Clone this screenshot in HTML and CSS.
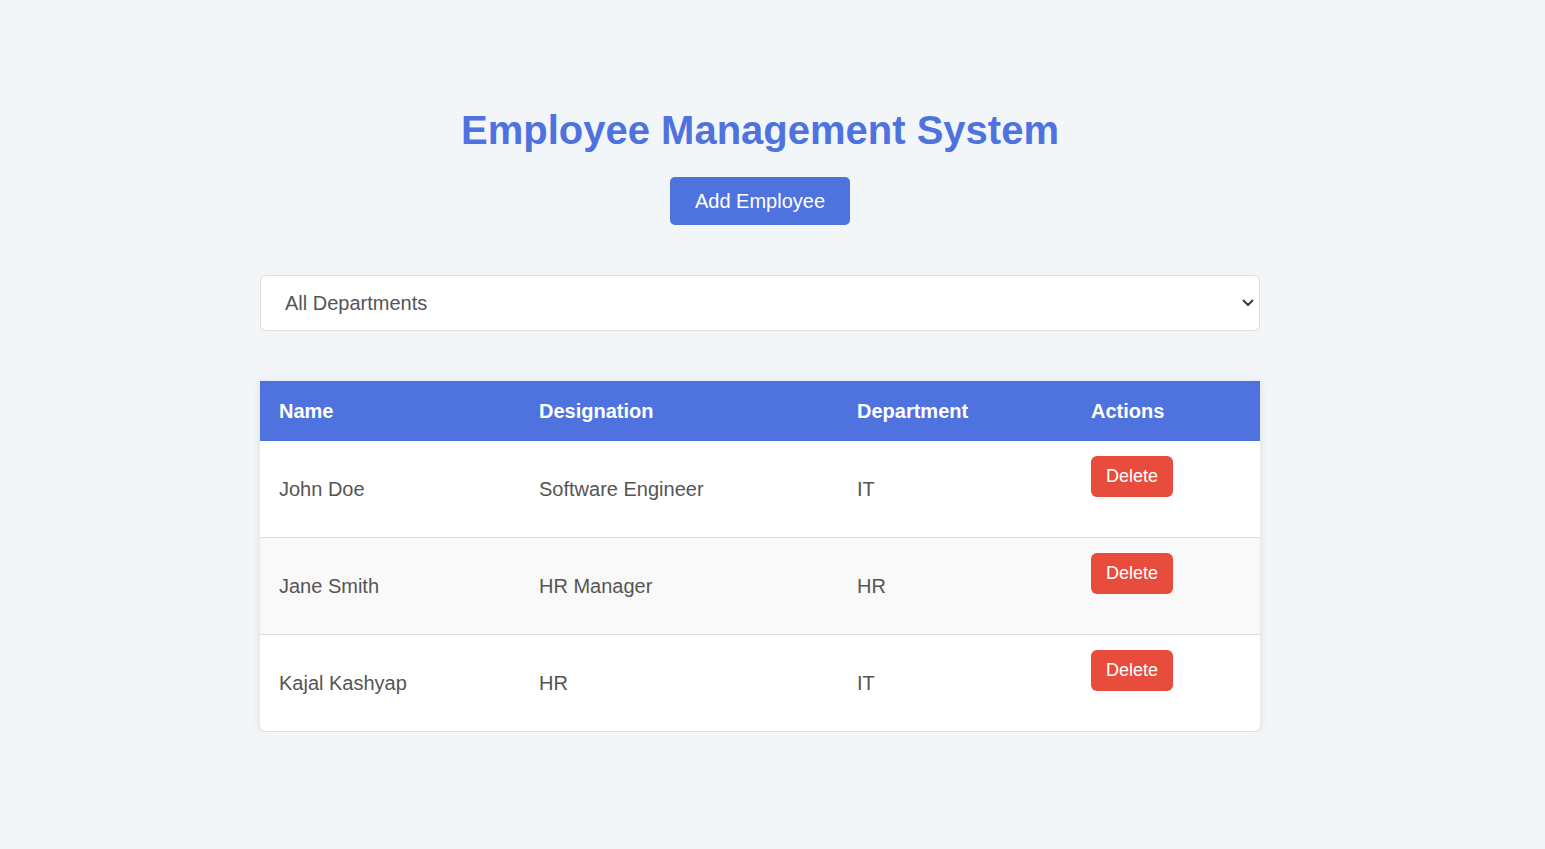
FILE: index.html
```html
<!DOCTYPE html>
<html lang="en">
<head>
<meta charset="utf-8">
<title>Employee Management System</title>
<link rel="stylesheet" href="styles.css">
</head>
<body>
<main class="container">
  <h1 class="title">Employee Management System</h1>
  <div class="add-wrap"><button class="btn-add">Add Employee</button></div>
  <div class="filter">
    <select class="dept-select">
      <option>All Departments</option>
      <option>IT</option>
      <option>HR</option>
    </select>
    <svg class="chevron" width="12" height="8" viewBox="0 0 12 8" aria-hidden="true">
      <path d="M1.5 1.5 L6 6 L10.5 1.5" fill="none" stroke="#3a3a3a" stroke-width="2" stroke-linecap="round" stroke-linejoin="round"/>
    </svg>
  </div>
  <table class="emp-table">
    <thead>
      <tr>
        <th class="col-name">Name</th>
        <th class="col-desig">Designation</th>
        <th class="col-dept">Department</th>
        <th class="col-act">Actions</th>
      </tr>
    </thead>
    <tbody>
      <tr>
        <td>John Doe</td>
        <td>Software Engineer</td>
        <td>IT</td>
        <td class="act"><button class="btn-del">Delete</button></td>
      </tr>
      <tr>
        <td>Jane Smith</td>
        <td>HR Manager</td>
        <td>HR</td>
        <td class="act"><button class="btn-del">Delete</button></td>
      </tr>
      <tr>
        <td>Kajal Kashyap</td>
        <td>HR</td>
        <td>IT</td>
        <td class="act"><button class="btn-del">Delete</button></td>
      </tr>
    </tbody>
  </table>
</main>
</body>
</html>
```

FILE: styles.css
```css
html, body {
  margin: 0;
  padding: 0;
}
body {
  background: #f3f6f9;
  font-family: "Liberation Sans", Arial, sans-serif;
  color: #555;
  padding-right: 25px;
}
.container {
  width: 1000px;
  margin: 0 auto;
  padding-top: 107px;
}
.title {
  margin: 0;
  text-align: center;
  font-size: 40px;
  line-height: 46px;
  font-weight: bold;
  color: #4e73df;
}
.add-wrap {
  display: flex;
  justify-content: center;
  margin-top: 24px;
}
.btn-add {
  width: 180px;
  height: 48px;
  border: none;
  border-radius: 5px;
  background: #4e73df;
  color: #fff;
  font-family: "Liberation Sans", Arial, sans-serif;
  font-size: 20px;
  cursor: pointer;
}
.filter {
  margin-top: 50px;
  position: relative;
}
.dept-select {
  display: block;
  width: 100%;
  height: 56px;
  box-sizing: border-box;
  border: 1px solid #ddd;
  border-radius: 6px;
  background: #fff;
  padding: 0 40px 0 24px;
  font-family: "Liberation Sans", Arial, sans-serif;
  font-size: 20px;
  color: #555;
  -webkit-appearance: none;
  appearance: none;
}
.chevron {
  position: absolute;
  right: 6px;
  top: 24px;
  pointer-events: none;
}
.emp-table {
  margin-top: 50px;
  width: 100%;
  border-collapse: separate;
  border-spacing: 0;
  background: #fff;
  border-radius: 0 0 8px 8px;
  box-shadow: 0 2px 10px rgba(0, 0, 0, 0.1);
  overflow: hidden;
  font-size: 20px;
}
.emp-table th {
  background: #4e73df;
  color: #fff;
  text-align: left;
  font-weight: bold;
  height: 60px;
  padding: 0 19px;
  box-sizing: border-box;
}
.col-name { width: 260px; }
.col-desig { width: 318px; }
.col-dept { width: 234px; }
.emp-table td {
  height: 97px;
  padding: 0 19px;
  box-sizing: border-box;
  vertical-align: middle;
  color: #555;
  border-bottom: 1px solid #ddd;
}
.emp-table tbody tr:nth-child(even) {
  background: #f9f9f9;
}
.emp-table td.act {
  vertical-align: top;
  padding-top: 15px;
}
.btn-del {
  width: 82px;
  height: 41px;
  border: none;
  border-radius: 6px;
  background: #e74c3c;
  color: #fff;
  font-family: "Liberation Sans", Arial, sans-serif;
  font-size: 18px;
  cursor: pointer;
}
```
